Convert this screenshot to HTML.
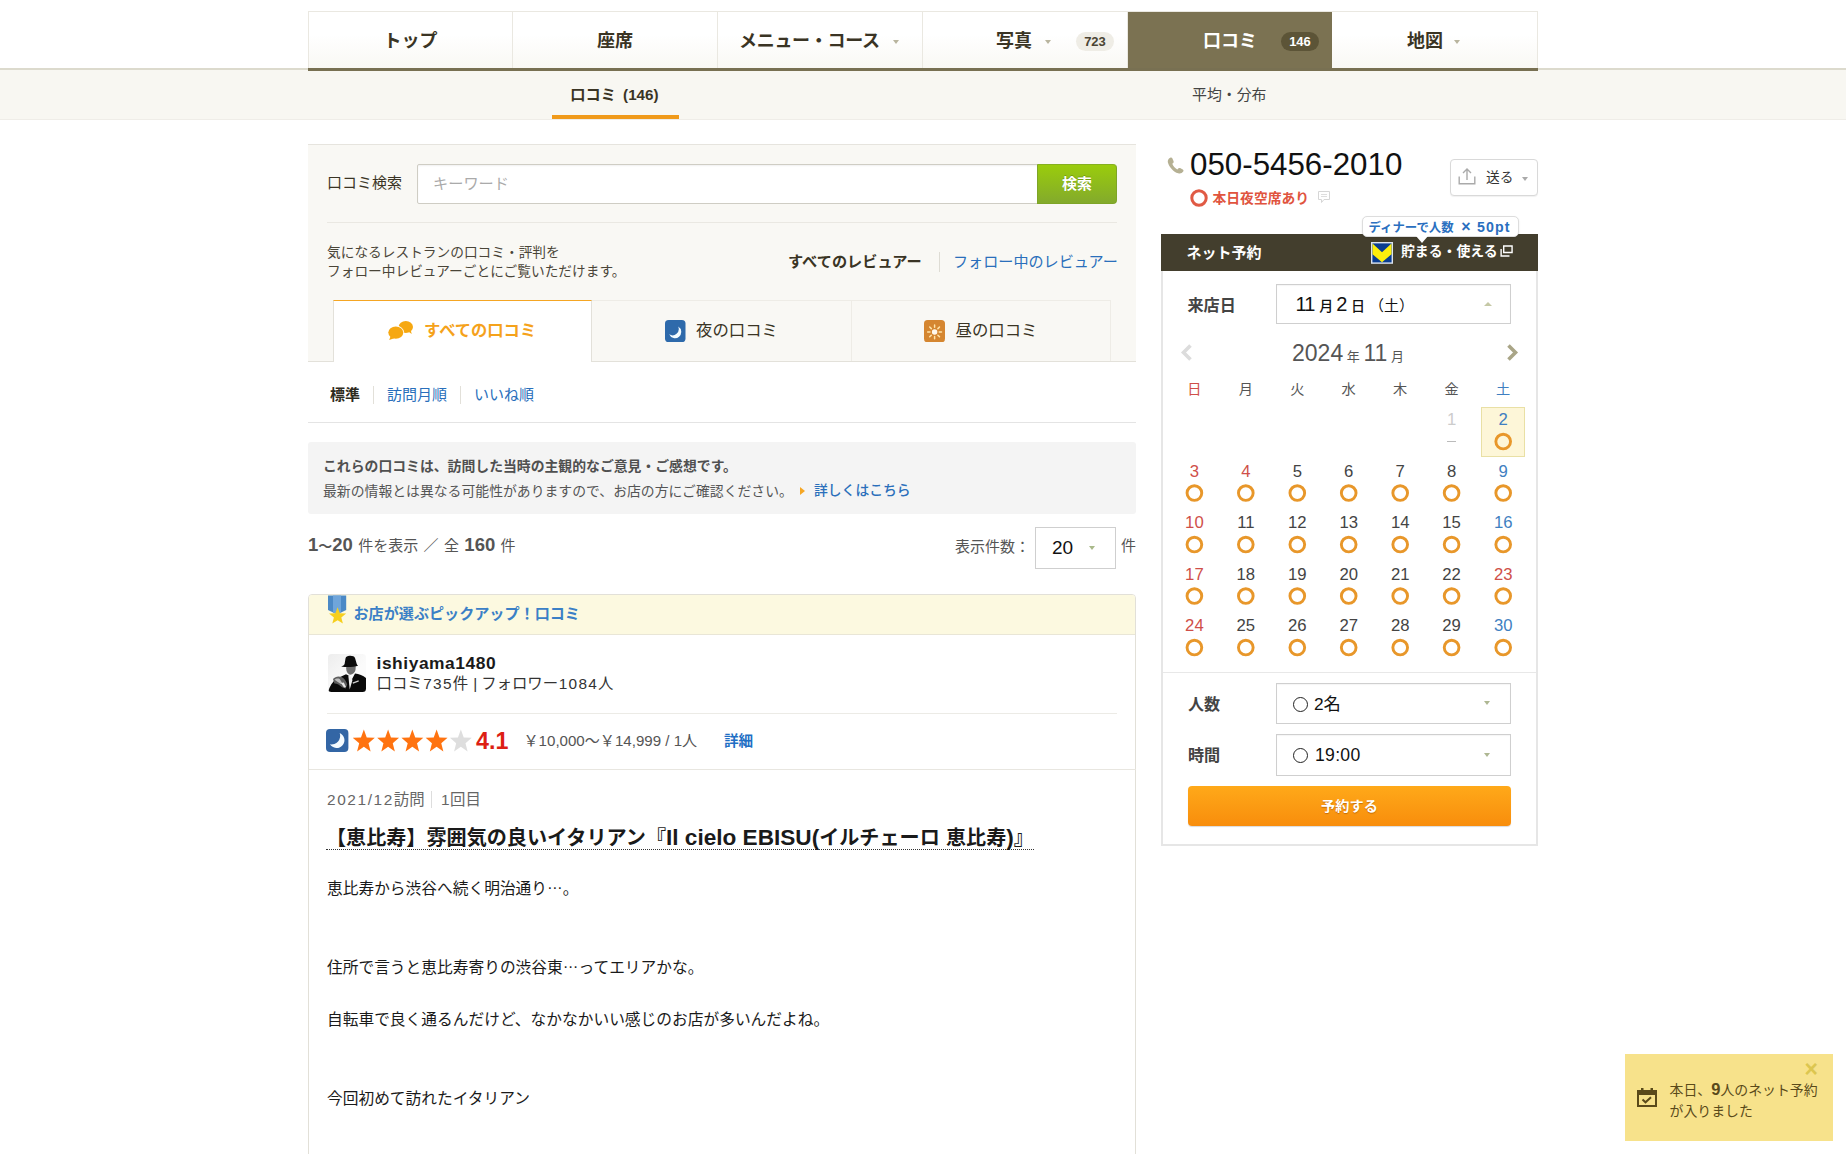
<!DOCTYPE html>
<html lang="ja">
<head>
<meta charset="utf-8">
<title>口コミ一覧</title>
<style>
*{box-sizing:border-box;margin:0;padding:0}
html,body{width:1846px;height:1154px;overflow:hidden;background:#fff}
body{position:relative;font-family:"Liberation Sans","Noto Sans CJK JP",sans-serif;color:#3a3424;font-size:15px}
.a{position:absolute}
.t{position:absolute;white-space:nowrap;line-height:20px}
.b{font-weight:bold}
.blue{color:#1766b8}
/* ---------- top nav ---------- */
#nav{left:308px;top:11px;width:1230px;height:57px;border:1px solid #eae8e1;border-bottom:none;background:linear-gradient(#ffffff 40%,#f9f8f4)}
#nav .tab{position:absolute;top:0;height:57px;width:205px;border-right:1px solid #eae8e1}
#nav .lbl{position:absolute;top:18px;line-height:22px;font-size:18px;font-weight:bold;color:#3a3424;white-space:nowrap;letter-spacing:0}
#navline{left:308px;top:68px;width:1230px;height:3px;background:#787052}
#subband{left:0;top:68px;width:1846px;height:52px;background:#f8f7f2;border-top:2px solid #dcdacd;border-bottom:1px solid #efede8}
.pill{position:absolute;height:19px;border-radius:9.500px;font-size:13px;font-weight:bold;line-height:19px;text-align:center}
.tl{font-size:22.6px;line-height:20px}
.el{position:relative;top:-.32em;line-height:0}
.hd{letter-spacing:1.300px;margin-left:.5px}
.caret{position:absolute;width:0;height:0;border-left:3.5px solid transparent;border-right:3.5px solid transparent;border-top:4px solid #b9b59f}
.sm{font-size:14px;font-weight:500}
.cd{width:40px;text-align:center;font-size:16.7px;line-height:20px}
.ring{position:absolute;width:17.4px;height:17.4px;border-radius:50%;border:2.8px solid #e8972a}
.sel{position:absolute;background:#fff;border:1px solid #cfcfcf;box-shadow:inset 0 1px 1px rgba(0,0,0,.04)}
</style>
</head>
<body>

<!-- sub band (behind) -->
<div class="a" id="subband"></div>
<!-- top navigation -->
<div class="a" id="nav">
  <div class="tab" style="left:-1px"><span class="lbl" style="left:75.500px">トップ</span></div>
  <div class="tab" style="left:204px"><span class="lbl" style="left:84px">座席</span></div>
  <div class="tab" style="left:409px"><span class="lbl" style="left:21px;letter-spacing:-.3px">メニュー・コース</span><i class="caret" style="left:175px;top:28px"></i></div>
  <div class="tab" style="left:614px"><span class="lbl" style="left:73px">写真</span><i class="caret" style="left:122px;top:28px"></i><span class="pill" style="left:153px;top:20px;width:38px;background:#efede6;color:#4a4433">723</span></div>
  <div class="tab" style="left:819px;background:#7b7252;border-right:none;width:204px"><span class="lbl" style="left:75px;color:#fff">口コミ</span><span class="pill" style="left:153px;top:20px;width:38px;background:#5c5437;color:#fff">146</span></div>
  <div class="tab" style="left:1024px;border-right:none"><span class="lbl" style="left:74px">地図</span><i class="caret" style="left:121px;top:28px"></i></div>
</div>
<div class="a" id="navline"></div>
<div class="t b" style="left:570.300px;top:84.500px;font-size:15.2px;color:#3a3424;word-spacing:3px">口コミ (146)</div>
<div class="a" style="left:552px;top:115px;width:127px;height:4px;background:#f09a1a"></div>
<div class="t" style="left:1192px;top:84.500px;font-size:14.9px;color:#444">平均・分布</div>


<!-- ===== MAIN COLUMN ===== -->
<div class="a" style="left:308px;top:144px;width:828px;height:218px;background:#f9f8f4;border-top:1px solid #e6e4de;border-bottom:1px solid #e3e1da"></div>
<div class="t" style="left:327px;top:173px;font-size:15px;color:#3a3424">口コミ検索</div>
<div class="a" style="left:417px;top:164px;width:622px;height:40px;background:#fff;border:1px solid #cfcdc4;border-radius:2px 0 0 2px;box-shadow:inset 0 1px 2px rgba(0,0,0,.06)"></div>
<div class="t" style="left:433px;top:174px;font-size:15.2px;color:#aaa">キーワード</div>
<div class="a" style="left:1037px;top:164px;width:80px;height:40px;border-radius:0 4px 4px 0;background:linear-gradient(#9acc0c,#83aa2c);border:1px solid #7ea527;border-top-color:#86b01f"></div>
<div class="t b" style="left:1037px;top:174px;width:80px;text-align:center;font-size:15px;color:#fff;text-shadow:0 -1px 0 rgba(60,90,0,.35)">検索</div>
<div class="a" style="left:327px;top:222px;width:790px;height:1px;background:#eae8e2"></div>
<div class="t" style="left:327px;top:243px;font-size:13.7px;color:#4a4538;line-height:19px">気になるレストランの口コミ・評判を<br>フォロー中レビュアーごとにご覧いただけます。</div>
<div class="t b" style="left:788px;top:251.500px;font-size:15.2px;color:#3a3424">すべてのレビュアー</div>
<div class="a" style="left:939px;top:252px;width:1px;height:20px;background:#dedcd4"></div>
<div class="t" style="left:953px;top:251.500px;font-size:15.1px;color:#2a6fbb">フォロー中のレビュアー</div>

<!-- tabs -->
<div class="a" style="left:591px;top:300px;width:520px;height:61px;border:1px solid #eeece6;border-left:none;border-bottom:none;background:#f9f8f4"></div>
<div class="a" style="left:851px;top:301px;width:1px;height:60px;background:#eeece6"></div>
<div class="a" style="left:333px;top:300px;width:259px;height:62px;background:#fff;border:1px solid #e3e1da;border-top:1.500px solid #f5a623;border-bottom:none"></div>
<svg class="a" style="left:387px;top:320px" width="28" height="22" viewBox="0 0 28 22"><g fill="#f6a811"><ellipse cx="18.800" cy="7" rx="7.200" ry="5.900"/><path d="M20.500 11l4.200 3-1.200-5z"/><ellipse cx="8.800" cy="12.600" rx="8.300" ry="7" fill="#fff"/><ellipse cx="8.800" cy="12.600" rx="7.500" ry="6.200"/><path d="M3.500 16.500l-1.300 3.600 5-1.800z"/></g></svg>
<div class="t b" style="left:424px;top:320px;font-size:16.3px;color:#f5a21b">すべての口コミ</div>
<svg class="a" style="left:665px;top:320px" width="20.500" height="22" viewBox="0 0 20.500 22"><rect width="20.500" height="22" rx="3.600" fill="#2e6aab"/><path d="M13.200 6.600A6.250 6.250 0 1 1 4.200 14.300 6.200 6.200 0 0 0 13.200 6.600z" fill="#f2fbff"/></svg>
<div class="t" style="left:696px;top:320px;font-size:16.4px;color:#3a3424">夜の口コミ</div>
<svg class="a" style="left:924px;top:320px" width="21" height="22.400" viewBox="0 0 21 22.400"><rect width="21" height="22.400" rx="3.600" fill="#d58630"/><circle cx="10.600" cy="11.900" r="2.750" fill="#fff8ec"/><g stroke="#ffe4a8" stroke-width="1.500" stroke-linecap="round"><path d="M10.600 5v2.300M10.600 16.500v2.300M3.700 11.900h2.300M15.200 11.900h2.300M5.700 7l1.600 1.600M13.900 15.200l1.600 1.600M15.500 7l-1.600 1.600M7.300 15.200l-1.600 1.600"/></g></svg>
<div class="t" style="left:955.500px;top:320px;font-size:16.4px;color:#3a3424">昼の口コミ</div>

<!-- sort -->
<div class="t b" style="left:330px;top:385px;font-size:15px;color:#2d2a20">標準</div>
<div class="a" style="left:373px;top:386px;width:1px;height:18px;background:#e2e0d9"></div>
<div class="t" style="left:387px;top:385px;font-size:15px;color:#2a6fbb">訪問月順</div>
<div class="a" style="left:460px;top:386px;width:1px;height:18px;background:#e2e0d9"></div>
<div class="t" style="left:474px;top:385px;font-size:15px;color:#2a6fbb">いいね順</div>
<div class="a" style="left:308px;top:422px;width:828px;height:1px;background:#e4e4e4"></div>

<!-- notice -->
<div class="a" style="left:308px;top:442px;width:828px;height:72px;background:#f4f4f4;border-radius:3px"></div>
<div class="t b" style="left:323px;top:456px;font-size:13.85px;color:#505050">これらの口コミは、訪問した当時の主観的なご意見・ご感想です。</div>
<div class="t" style="left:323px;top:480.700px;font-size:13.85px;color:#555">最新の情報とは異なる可能性がありますので、お店の方にご確認ください。</div>
<div class="a" style="left:800px;top:486.500px;width:0;height:0;border-top:4px solid transparent;border-bottom:4px solid transparent;border-left:5px solid #f5a623"></div>
<div class="t" style="left:814px;top:480.700px;font-size:13.8px;color:#2a6fbb;font-weight:500">詳しくはこちら</div>

<!-- count row -->
<div class="t" style="left:308px;top:535px;font-size:15px;color:#555;word-spacing:1.200px"><b style="font-size:18.5px">1<span style="font-size:14px">〜</span>20</b> 件を表示 ／ 全 <b style="font-size:18.5px">160</b> 件</div>
<div class="t" style="left:955px;top:537px;font-size:15px;color:#555">表示件数：</div>
<div class="a" style="left:1035px;top:527px;width:81px;height:42px;background:#fff;border:1px solid #cfcfcf"></div>
<div class="t" style="left:1052px;top:538px;font-size:19px;color:#111">20</div>
<i class="caret" style="left:1089px;top:546px;border-top-color:#a9b98a"></i>
<div class="t" style="left:1121px;top:536px;font-size:15px;color:#555">件</div>

<!-- pickup card -->
<div class="a" style="left:308px;top:594px;width:828px;height:600px;border:1px solid #e2e0d8;border-radius:4px;background:#fff;overflow:hidden">
  <div class="a" style="left:0;top:0;width:829px;height:40px;background:#fcf9e0;border-bottom:1px solid #e9e6d6"></div>
</div>
<svg class="a" style="left:326px;top:595px" width="22" height="30" viewBox="0 0 22 30"><path d="M2 .5h18.200v14.500l-9.100 4.500-9.100-4.500z" fill="#4b89c6"/><path d="M7 .5h8v17.500h-8z" fill="#6fa5da"/><polygon points="11.60,12.30 13.89,18.14 20.16,18.52 15.31,22.51 16.89,28.58 11.60,25.20 6.31,28.58 7.89,22.51 3.04,18.52 9.31,18.14" fill="#f6cf1d"/></svg>
<div class="t b" style="left:353.500px;top:604px;font-size:15.1px;color:#3b80c6">お店が選ぶピックアップ！口コミ</div>

<svg class="a" style="left:327.500px;top:654px" width="38" height="38" viewBox="0 0 38 38"><defs><linearGradient id="avg" x1="0" y1="0" x2="1" y2="1"><stop offset="0" stop-color="#ededed"/><stop offset=".6" stop-color="#fbfbfb"/></linearGradient><clipPath id="avc"><rect width="38" height="38" rx="3.500"/></clipPath></defs><g clip-path="url(#avc)"><rect width="38" height="38" fill="url(#avg)"/><path d="M18.500 11.800c-1 3.500 0 7 2.800 8.800 3 .5 5.500-1.500 6.200-4.500l.3-4.800z" fill="#6d6d6d"/><path d="M13.200 12.500c1.800-.6 3-1.200 3.400-2.400l.9-5.600c.3-1.800 2-2.600 4.200-2.700 2.600-.1 4.800.5 5.400 2.400l1.500 5.200c.4 1.300.9 1.900 1.700 2.400-4.500 1.200-12 1.700-17.100.7z" fill="#0b0b0b"/><path d="M0 38c1.500-5.500 4.500-10.500 9-13.500l9-4.200 3.200 1.500 2.500 4 3.300-6.300c4 .6 8 2 11 4.500v14z" fill="#0a0a0a"/><path d="M20.300 21.300l2.500 1.200 1.700 3.500-2.800 9.500z" fill="#efefef"/><path d="M5 25c2-2.500 5.500-3.300 8.500-2 2.300 1 4.800 4 5.700 7.500l-1.500 4-3.700-1.300c-2.600-2.700-5.300-4-7.600-3.800z" fill="#5e5e5e"/><path d="M6.500 25.800c1.400-1.300 3.500-1.700 5.200-.8l2.800 4.600-1.700.4z" fill="#bdbdbd"/><path d="M13 29l3 4.500 2-.5-2.200-4.600z" fill="#e6e6e6"/><path d="M24.500 28.500l6-2.200.4 1.200-5.800 2.300z" fill="#cfcfcf"/></g></svg>
<div class="t b" style="left:376.500px;top:652.800px;font-size:17.4px;letter-spacing:.55px;color:#1a1a1a">ishiyama1480</div>
<div class="t" style="left:376.500px;top:674px;font-size:15.4px;color:#333">口コミ<span class="hd">735</span>件<span style="margin:0 4px 0 5px">|</span>フォロワー<span class="hd">1084</span>人</div>
<div class="a" style="left:327px;top:713px;width:790px;height:1px;background:#ecebe6"></div>

<svg class="a" style="left:326.400px;top:729px" width="22.400" height="22.900" viewBox="0 0 22.400 22.900"><rect width="22.400" height="22.900" rx="4" fill="#3366a5"/><path d="M13.700 4A7.800 7.800 0 1 1 4 15.250 8.600 8.600 0 0 0 13.700 4z" fill="#f4fbff"/></svg>
<svg class="a" style="left:353px;top:729px" width="122" height="24" viewBox="0 0 122 24"><polygon points="10.85,0.41 13.73,8.40 21.79,8.83 15.51,14.21 17.61,22.46 10.85,17.79 4.09,22.46 6.19,14.21 -0.09,8.83 7.97,8.40" fill="#ff7310"/><polygon points="35.10,0.41 37.98,8.40 46.04,8.83 39.76,14.21 41.86,22.46 35.10,17.79 28.34,22.46 30.44,14.21 24.16,8.83 32.22,8.40" fill="#ff7310"/><polygon points="59.35,0.41 62.23,8.40 70.29,8.83 64.01,14.21 66.11,22.46 59.35,17.79 52.59,22.46 54.69,14.21 48.41,8.83 56.47,8.40" fill="#ff7310"/><polygon points="83.60,0.41 86.48,8.40 94.54,8.83 88.26,14.21 90.36,22.46 83.60,17.79 76.84,22.46 78.94,14.21 72.66,8.83 80.72,8.40" fill="#ff7310"/><polygon points="107.85,0.41 110.73,8.40 118.79,8.83 112.51,14.21 114.61,22.46 107.85,17.79 101.09,22.46 103.19,14.21 96.91,8.83 104.97,8.40" fill="#dedede"/></svg>
<div class="t b" style="left:476px;top:727px;font-size:23.3px;line-height:28px;color:#dd1f14">4.1</div>
<div class="t" style="left:523.500px;top:731px;font-size:15.1px;color:#555">￥10,000～￥14,999 / 1人</div>
<div class="t b" style="left:724px;top:731px;font-size:14.6px;color:#1f6fc4">詳細</div>
<div class="a" style="left:309px;top:769px;width:827px;height:1px;background:#e8e6e0"></div>

<div class="t" style="left:327px;top:789.500px;font-size:15.4px;color:#666"><span style="letter-spacing:1.600px">2021/12</span>訪問</div>
<div class="a" style="left:431px;top:791px;width:1px;height:17px;background:#ddd"></div>
<div class="t" style="left:441px;top:789.500px;font-size:15.4px;color:#666"><span style="letter-spacing:.5px">1</span>回目</div>
<div class="t b" style="left:326px;top:826px;font-size:20.1px;line-height:24px;height:24px;color:#1a1a1a;border-bottom:1.500px dotted #333">【恵比寿】雰囲気の良いイタリアン『<span class="tl">Il cielo EBISU(</span>イルチェーロ<span class="tl"> </span>恵比寿<span class="tl">)</span>』</div>
<div class="t" style="left:327px;top:876px;font-size:15.72px;line-height:26.2px;color:#1a1a1a">恵比寿から渋谷へ続く明治通り<span class="el">…</span>。<br><br><br>住所で言うと恵比寿寄りの渋谷東<span class="el">…</span>ってエリアかな。<br><br>自転車で良く通るんだけど、なかなかいい感じのお店が多いんだよね。<br><br><br>今回初めて訪れたイタリアン</div>

<!--MAIN-->


<!-- ===== SIDE COLUMN ===== -->
<svg class="a" style="left:1167px;top:157px" width="18" height="18" viewBox="0 0 18 18"><path d="M3.200.8c.8-.5 1.700-.3 2.100.5l1.300 2.900c.3.700.1 1.300-.4 1.800l-.9.800c.9 2.400 2.600 4.300 5 5.600l1-1c.5-.5 1.200-.6 1.800-.3l2.700 1.500c.8.400.9 1.300.4 2-1.100 1.600-2.900 2.400-5 1.700C6.300 14.600 2.200 10 .9 5.400.4 3.500 1.400 1.800 3.200.8z" fill="#b5b093"/></svg>
<div class="t" style="left:1190px;top:147px;font-size:31.3px;line-height:36px;color:#111">050-5456-2010</div>
<svg class="a" style="left:1189.500px;top:188.500px" width="18" height="18" viewBox="0 0 18 18"><circle cx="9" cy="9" r="7.200" fill="none" stroke="#e05a44" stroke-width="3"/></svg>
<div class="t b" style="left:1212.500px;top:188.600px;font-size:13.8px;color:#e0543e">本日夜空席あり</div>
<svg class="a" style="left:1318px;top:191px" width="12" height="13" viewBox="0 0 12 13"><path d="M.5.5h11v8H6l-2.500 3v-3h-3z" fill="#fff" stroke="#d6d6d6"/><path d="M3 3.500h6M3 5.500h6" stroke="#dedede"/></svg>
<!-- send button -->
<div class="a" style="left:1450px;top:159px;width:88px;height:37px;border:1px solid #d9d9d9;border-radius:4px;background:#fff;box-shadow:0 1px 1px rgba(0,0,0,.06)"></div>
<svg class="a" style="left:1458px;top:168px" width="18" height="17" viewBox="0 0 18 17"><g fill="none" stroke="#aaa" stroke-width="1.4"><path d="M1.200 8.500v7.300h15.600V8.500"/><path d="M9 12V1.500M5 5l4-4 4 4"/></g></svg>
<div class="t" style="left:1486px;top:167.600px;font-size:13.7px;color:#333">送る</div>
<i class="caret" style="left:1522px;top:177px;border-top-color:#aaa"></i>

<!-- reservation card -->
<div class="a" style="left:1161px;top:234px;width:377px;height:612px;border:2px solid #e6e6e6;background:#fff"></div>
<div class="a" style="left:1161px;top:234px;width:377px;height:37px;background:#433e2d"></div>
<div class="t b" style="left:1186.500px;top:242.600px;font-size:15px;color:#fff">ネット予約</div>
<svg class="a" style="left:1371px;top:242px" width="22" height="21.800" viewBox="0 0 22 21.800"><rect x=".7" y=".7" width="20.600" height="20.400" fill="#0a3d91" stroke="#dce4ef" stroke-width="1.400"/><path d="M1.500 1.500L11 10.200 20.500 1.500V12.300L11 20.200 1.500 12.300z" fill="#fdee0c"/></svg>
<div class="t b" style="left:1401px;top:241px;font-size:13.85px;color:#fff">貯まる・使える</div>
<svg class="a" style="left:1500px;top:245px" width="13" height="12" viewBox="0 0 14 12" preserveAspectRatio="none"><g fill="none" stroke="#fff" stroke-width="1.500"><rect x="4" y="1" width="9" height="6.500"/><path d="M1.200 4v7h9"/></g></svg>
<!-- tooltip -->
<div class="a" style="left:1362px;top:216px;width:157px;height:21px;background:#fff;border:1px solid #ddd;border-radius:5px;box-shadow:0 1px 2px rgba(0,0,0,.1)"></div>
<div class="a" style="left:1416px;top:236px;width:0;height:0;border-left:6px solid transparent;border-right:6px solid transparent;border-top:7px solid #fff"></div>
<div class="t b" style="left:1368.500px;top:217px;font-size:12.4px;color:#2a6fc0">ディナーで人数<span style="font-size:16px;line-height:10px;margin:0 6.500px 0 7.500px">×</span><span style="font-size:14.2px;letter-spacing:1.100px">50pt</span></div>

<div class="t b" style="left:1187.500px;top:294.800px;font-size:16.1px;color:#444">来店日</div>
<div class="sel" style="left:1276px;top:284px;width:235px;height:40px"></div>
<div class="t" style="left:1295.500px;top:292.800px;font-size:20px;line-height:22px;color:#111"><span style="letter-spacing:-1px">11</span><span class="sm" style="margin:0 3px 0 5px">月</span>2<span class="sm" style="margin:0 0 0 3.500px">日</span><span style="font-size:15px;margin-left:4px">（土）</span></div>
<div class="a" style="left:1484px;top:302px;width:0;height:0;border-left:4px solid transparent;border-right:4px solid transparent;border-bottom:4.500px solid #c5c8a5"></div>

<svg class="a" style="left:1180px;top:344px" width="13" height="17" viewBox="0 0 13 17"><path d="M10.500 1.500L3.500 8.500l7 7" fill="none" stroke="#dcdcdc" stroke-width="3.600"/></svg>
<svg class="a" style="left:1506px;top:344px" width="13" height="17" viewBox="0 0 13 17"><path d="M2.500 1.500l7 7-7 7" fill="none" stroke="#a9a587" stroke-width="3.600"/></svg>
<div class="t" style="left:1248px;top:340px;width:200px;text-align:center;font-size:23px;line-height:26px;color:#555">2024<span style="font-size:13px"> 年 </span>11<span style="font-size:13px"> 月</span></div>
<div class="t" style="left:1174.4px;top:378.700px;width:40px;text-align:center;font-size:14.2px;color:#cf4f49">日</div><div class="t" style="left:1225.8px;top:378.700px;width:40px;text-align:center;font-size:14.2px;color:#555">月</div><div class="t" style="left:1277.3px;top:378.700px;width:40px;text-align:center;font-size:14.2px;color:#555">火</div><div class="t" style="left:1328.7px;top:378.700px;width:40px;text-align:center;font-size:14.2px;color:#555">水</div><div class="t" style="left:1380.2px;top:378.700px;width:40px;text-align:center;font-size:14.2px;color:#555">木</div><div class="t" style="left:1431.6px;top:378.700px;width:40px;text-align:center;font-size:14.2px;color:#555">金</div><div class="t" style="left:1483.2px;top:378.700px;width:40px;text-align:center;font-size:14.2px;color:#3f7fc1">土</div>
<div class="a" style="left:1481px;top:407px;width:44px;height:50px;background:#fdf6d8;border:1px solid #e9e0a5"></div>
<div class="t cd" style="left:1431.6px;top:410.3px;color:#ccc">1</div><div class="a" style="left:1447.1px;top:441.0px;width:9px;height:1px;background:#bbb"></div>
<div class="t cd" style="left:1483.2px;top:410.3px;color:#3f7fc1">2</div>
<div class="t cd" style="left:1174.4px;top:461.7px;color:#cf4f49">3</div>
<div class="t cd" style="left:1225.8px;top:461.7px;color:#cf4f49">4</div>
<div class="t cd" style="left:1277.3px;top:461.7px;color:#444">5</div>
<div class="t cd" style="left:1328.7px;top:461.7px;color:#444">6</div>
<div class="t cd" style="left:1380.2px;top:461.7px;color:#444">7</div>
<div class="t cd" style="left:1431.6px;top:461.7px;color:#444">8</div>
<div class="t cd" style="left:1483.2px;top:461.7px;color:#3f7fc1">9</div>
<div class="t cd" style="left:1174.4px;top:513.2px;color:#cf4f49">10</div>
<div class="t cd" style="left:1225.8px;top:513.2px;color:#444">11</div>
<div class="t cd" style="left:1277.3px;top:513.2px;color:#444">12</div>
<div class="t cd" style="left:1328.7px;top:513.2px;color:#444">13</div>
<div class="t cd" style="left:1380.2px;top:513.2px;color:#444">14</div>
<div class="t cd" style="left:1431.6px;top:513.2px;color:#444">15</div>
<div class="t cd" style="left:1483.2px;top:513.2px;color:#3f7fc1">16</div>
<div class="t cd" style="left:1174.4px;top:564.6px;color:#cf4f49">17</div>
<div class="t cd" style="left:1225.8px;top:564.6px;color:#444">18</div>
<div class="t cd" style="left:1277.3px;top:564.6px;color:#444">19</div>
<div class="t cd" style="left:1328.7px;top:564.6px;color:#444">20</div>
<div class="t cd" style="left:1380.2px;top:564.6px;color:#444">21</div>
<div class="t cd" style="left:1431.6px;top:564.6px;color:#444">22</div>
<div class="t cd" style="left:1483.2px;top:564.6px;color:#cf4f49">23</div>
<div class="t cd" style="left:1174.4px;top:616.1px;color:#cf4f49">24</div>
<div class="t cd" style="left:1225.8px;top:616.1px;color:#444">25</div>
<div class="t cd" style="left:1277.3px;top:616.1px;color:#444">26</div>
<div class="t cd" style="left:1328.7px;top:616.1px;color:#444">27</div>
<div class="t cd" style="left:1380.2px;top:616.1px;color:#444">28</div>
<div class="t cd" style="left:1431.6px;top:616.1px;color:#444">29</div>
<div class="t cd" style="left:1483.2px;top:616.1px;color:#3f7fc1">30</div>

<svg class="a" style="left:1161px;top:400px" width="377" height="270" viewBox="0 0 377 270"><g fill="none" stroke="#e8972a" stroke-width="2.900"><circle cx="342.2" cy="41.55" r="7.350"/><circle cx="33.4" cy="93.05" r="7.350"/><circle cx="84.8" cy="93.05" r="7.350"/><circle cx="136.3" cy="93.05" r="7.350"/><circle cx="187.7" cy="93.05" r="7.350"/><circle cx="239.2" cy="93.05" r="7.350"/><circle cx="290.6" cy="93.05" r="7.350"/><circle cx="342.2" cy="93.05" r="7.350"/><circle cx="33.4" cy="144.55" r="7.350"/><circle cx="84.8" cy="144.55" r="7.350"/><circle cx="136.3" cy="144.55" r="7.350"/><circle cx="187.7" cy="144.55" r="7.350"/><circle cx="239.2" cy="144.55" r="7.350"/><circle cx="290.6" cy="144.55" r="7.350"/><circle cx="342.2" cy="144.55" r="7.350"/><circle cx="33.4" cy="196.05" r="7.350"/><circle cx="84.8" cy="196.05" r="7.350"/><circle cx="136.3" cy="196.05" r="7.350"/><circle cx="187.7" cy="196.05" r="7.350"/><circle cx="239.2" cy="196.05" r="7.350"/><circle cx="290.6" cy="196.05" r="7.350"/><circle cx="342.2" cy="196.05" r="7.350"/><circle cx="33.4" cy="247.55" r="7.350"/><circle cx="84.8" cy="247.55" r="7.350"/><circle cx="136.3" cy="247.55" r="7.350"/><circle cx="187.7" cy="247.55" r="7.350"/><circle cx="239.2" cy="247.55" r="7.350"/><circle cx="290.6" cy="247.55" r="7.350"/><circle cx="342.2" cy="247.55" r="7.350"/></g></svg>
<div class="a" style="left:1163px;top:672px;width:373px;height:1px;background:#e8e8e8"></div>
<div class="t b" style="left:1188px;top:694px;font-size:16.1px;color:#444">人数</div>
<div class="sel" style="left:1276px;top:683px;width:235px;height:41px"></div>
<i class="a" style="left:1293px;top:696.500px;width:15px;height:15px;border-radius:50%;border:1.200px solid #222"></i>
<div class="t" style="left:1314px;top:694px;font-size:17.3px;color:#111">2名</div>
<i class="caret" style="left:1484px;top:701px;border-top-color:#aeb792"></i>
<div class="t b" style="left:1188px;top:745px;font-size:16.1px;color:#444">時間</div>
<div class="sel" style="left:1276px;top:734px;width:235px;height:42px"></div>
<i class="a" style="left:1293px;top:747.500px;width:15px;height:15px;border-radius:50%;border:1.200px solid #222"></i>
<div class="t" style="left:1315px;top:745px;font-size:17.6px;color:#111;letter-spacing:.3px">19:00</div>
<i class="caret" style="left:1484px;top:753px;border-top-color:#aeb792"></i>
<div class="a" style="left:1188px;top:786px;width:323px;height:40px;border-radius:4px;background:linear-gradient(#ffa919,#f88d0c);box-shadow:0 1px 1px rgba(0,0,0,.15)"></div>
<div class="t b" style="left:1188px;top:796px;width:323px;text-align:center;font-size:14.2px;color:#fff;text-shadow:0 1px 1px rgba(160,80,0,.6)">予約する</div>



<!-- ===== TOAST ===== -->
<div class="a" style="left:1625.300px;top:1053.700px;width:207.700px;height:87.600px;background:#f7e28b"></div>
<div class="t b" style="left:1804.500px;top:1059px;font-size:23px;line-height:20px;color:#dcc650">×</div>
<svg class="a" style="left:1637px;top:1088px" width="20" height="19" viewBox="0 0 20 19"><g fill="none" stroke="#5a4a1a"><rect x="1" y="3" width="18" height="15" stroke-width="2"/><path d="M1 5.500h18" stroke-width="3"/><path d="M5.500 11.500l3 2.800 5.500-5" stroke-width="2"/></g><rect x="4" y="0" width="2.500" height="4" fill="#5a4a1a"/><rect x="13.500" y="0" width="2.500" height="4" fill="#5a4a1a"/></svg>
<div class="t" style="left:1669.500px;top:1078.500px;font-size:13.9px;line-height:21px;color:#5a4a1a">本日、<b style="font-size:16.500px">9</b>人のネット予約<br>が入りました</div>


</body>
</html>
